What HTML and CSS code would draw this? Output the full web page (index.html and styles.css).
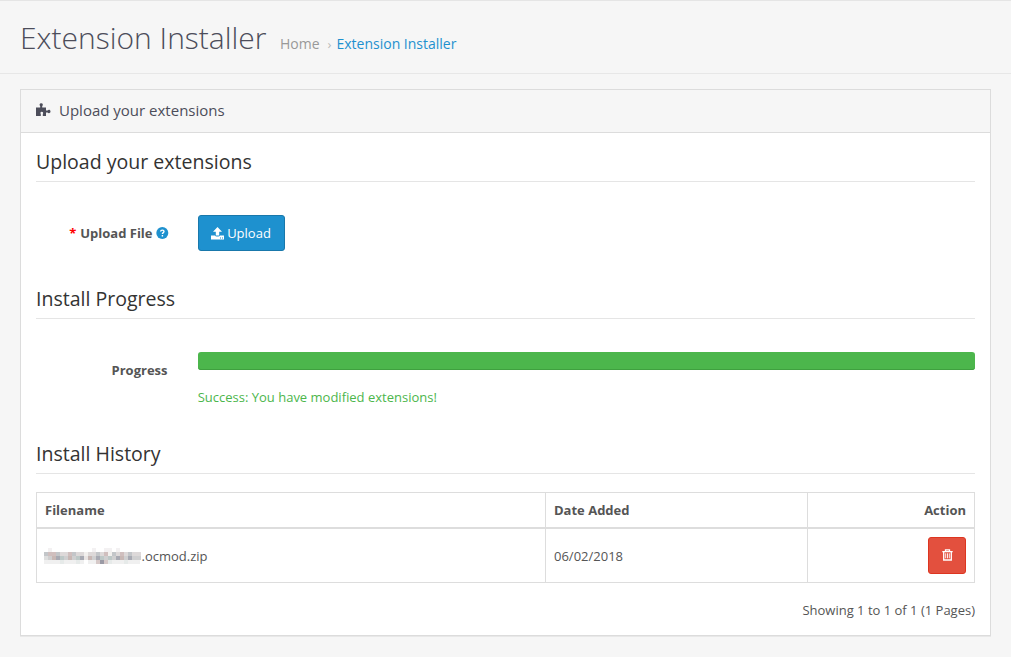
FILE: index.html
```
<!DOCTYPE html>
<html lang="en">
<head>
<meta charset="utf-8">
<title>Extension Installer</title>
<link rel="stylesheet" href="styles.css">
</head>
<body>
<header class="page-header">
  <h1>Extension Installer</h1>
  <nav class="breadcrumb"><a class="home">Home</a><span class="sep">›</span><a class="current">Extension Installer</a></nav>
</header>
<main class="panel">
  <div class="panel-heading">
    <svg class="puzzle" width="15" height="14" viewBox="0 0 15 14"><path d="M0 4.500h4.200V3.200C3.200 2.400 3.200.3 5.200.3s2 2.100 1 2.900v1.300H10v3h1.600c.8-1.100 2.900-.9 2.900 1s-2.100 2.100-2.900 1H10V13H6.800v-2c.8-1 .3-2.200-1-2.200S4 10 4.800 11v2H0z" fill="#4c4d5a"/></svg>
    <h3>Upload your extensions</h3>
  </div>
  <div class="panel-body">
    <h2>Upload your extensions</h2>
    <div class="form-row upload-row">
      <label class="label label-file"><span class="required">*</span> Upload File
        <svg class="help" width="13" height="12" viewBox="0 0 13 12"><circle cx="6.300" cy="6" r="6" fill="#1e91cf"/><path d="M4.600 4.500C4.800 2.600 8 2.700 8 4.500C8 5.600 6.400 5.600 6.400 7M6.400 8v1.400" fill="none" stroke="#fff" stroke-width="1.400"/></svg>
      </label>
      <button class="btn btn-primary"><svg width="13" height="13" viewBox="0 0 13 13"><path d="M6.500 0L11 4.800H8.200V8.500H4.800V4.800H2zM0 8.500h4c.2 1.400 4.800 1.400 5 0H13V12.500H0z" fill="#fff"/><path d="M9 11h1M11 11h1" stroke="#1e91cf"/></svg>Upload</button>
    </div>
    <h2>Install Progress</h2>
    <div class="form-row progress-row">
      <label class="label">Progress</label>
      <div class="progress-col">
        <div class="progress"></div>
        <div class="success">Success: You have modified extensions!</div>
      </div>
    </div>
    <h2>Install History</h2>
    <table class="history">
      <thead><tr><th class="c-file">Filename</th><th class="c-date">Date Added</th><th class="c-action">Action</th></tr></thead>
      <tbody><tr><td class="c-text"><div class="filename"><svg class="redacted" width="97" height="16" viewBox="0 0 97 16" shape-rendering="crispEdges" stroke-width="4">
        <path d="M4 2h4M48 2h4M60 2h8M72 2h4" stroke="#f3f1f2"/>
        <path d="M0 6h97" stroke="#ddd9d9"/>
        <path d="M0 6h4M12 6h4M28 6h4M52 6h4M68 6h4M84 6h4" stroke="#c3c6c9"/>
        <path d="M4 6h8M24 6h4M60 6h4M76 6h4" stroke="#d0bfbe"/>
        <path d="M40 6h4M64 6h4" stroke="#f2f0ee"/>
        <path d="M0 10h97" stroke="#cfcfd0"/>
        <path d="M0 10h4" stroke="#dedede"/>
        <path d="M12 10h4M36 10h4M52 10h4M72 10h4M84 10h4" stroke="#a8aab3"/>
        <path d="M8 10h4M24 10h4M44 10h4M76 10h4" stroke="#c8b8b5"/>
        <path d="M16 10h4M32 10h4M56 10h4M64 10h4" stroke="#bdc8c7"/>
        <path d="M40 10h4" stroke="#e9e5e4"/>
        <path d="M0 14h40M44 14h52" stroke="#f0f0f0"/>
        <path d="M16 14h4M32 14h4M64 14h4M80 14h4" stroke="#e6eae9"/>
        <path d="M56 14h4" stroke="#9b9aa5"/>
        <path d="M52 14h4M60 14h4" stroke="#d6c9c8"/>
      </svg>.ocmod.zip</div></td><td class="c-text">06/02/2018</td><td class="c-action"><button class="btn btn-danger" aria-label="Delete"><svg width="11" height="12" viewBox="0 0 11 12"><path d="M.3 2.600h10.400M3.500 2.500V.900h4v1.600M1.700 3v8h7.600V3" fill="none" stroke="#fff" stroke-width="1.300"/><path d="M3.700 4.300v5M5.500 4.300v5M7.300 4.300v5" stroke="#fff" stroke-width=".9"/></svg></button></td></tr></tbody>
    </table>
    <div class="results">Showing 1 to 1 of 1 (1 Pages)</div>
  </div>
</main>
</body>
</html>
```
FILE: styles.css
```
* { box-sizing: border-box; }
body { margin: 0; height: 657px; overflow: hidden; background: #f6f6f6; color: #555; font: 13px/20px "Open Sans", sans-serif; }
h1, h2, h3 { margin: 0; }
.page-header { height: 74px; border-top: 1px solid #e5e5e5; border-bottom: 1px solid #e7e7e7; padding: 16px 0 0 20px; display: flex; align-items: baseline; }
h1 { font-size: 30px; line-height: 42px; font-weight: 300; color: #4c4d5a; }
.breadcrumb { margin-left: 13.5px; font-size: 14px; display: flex; align-items: baseline; }
.home { color: #999; }
.sep { color: #bbb; font-size: 13px; margin: 0 5px 0 8px; }
.current { color: #1e91cf; }
.panel { margin: 15px 20px 0; height: 547px; border: 1px solid #dcdcdc; box-shadow: 0 1px 0 #e8e8e8; background: #fff; }
.panel-heading { height: 43px; display: flex; align-items: center; background: #f6f6f6; border-bottom: 1px solid #dcdcdc; padding: 0 0 2px 15px; }
.puzzle { margin-right: 8px; }
h3 { font-size: 15px; font-weight: 400; color: #4c4d5a; }
.panel-body { padding: 15px 15px 0; }
h2 { height: 34px; font-size: 19.55px; line-height: 28px; font-weight: 400; color: #333; border-bottom: 1px solid #e5e5e5; }
.form-row { display: grid; grid-template-columns: 132px 1fr; column-gap: 30px; justify-items: start; }
.upload-row { height: 103px; padding-top: 33px; }
.progress-row { height: 121px; padding-top: 33px; }
.label { justify-self: end; font-weight: 700; padding: 8px .5px 0 0; display: flex; align-items: flex-start; }
.label-file { padding-right: 0; }
.required { color: red; margin-right: 4px; }
.help { margin: 4px -1px 0 3.500px; }
.btn { display: flex; align-items: center; justify-content: center; border: 1px solid; border-radius: 3px; color: #fff; font: 13px/20px "Open Sans", sans-serif; padding: 0; }
.btn-primary { width: 87px; height: 36px; gap: 3px; padding-right: 1px; background: #1e91cf; border-color: #1978ab; }
.btn-danger { width: 38px; height: 37px; margin-left: auto; background: #e3503e; border-color: #dd3520; }
.progress-col { width: 100%; }
.progress { height: 18px; border-radius: 3px; background: #4cb64c; box-shadow: inset 0 -1px 0 #3fa03f; }
.success { color: #4cb64c; margin: 17px 0 0 -.3px; }
.history { width: 939px; margin-top: 18px; table-layout: fixed; border-collapse: collapse; }
th, td { border: 1px solid #ddd; padding: 8px; text-align: left; vertical-align: middle; }
th { height: 35px; border-bottom-width: 2px; padding-top: 7px; padding-bottom: 6px; }
.c-file { width: 509px; }
.c-date { width: 262px; }
th.c-action, td.c-action { text-align: right; }
td { height: 54px; }
.c-text { padding-top: 10px; }
.filename { display: flex; align-items: center; margin-left: -1px; }
.redacted { margin-right: .5px; }
.results { text-align: right; margin-top: 17px; }
```
